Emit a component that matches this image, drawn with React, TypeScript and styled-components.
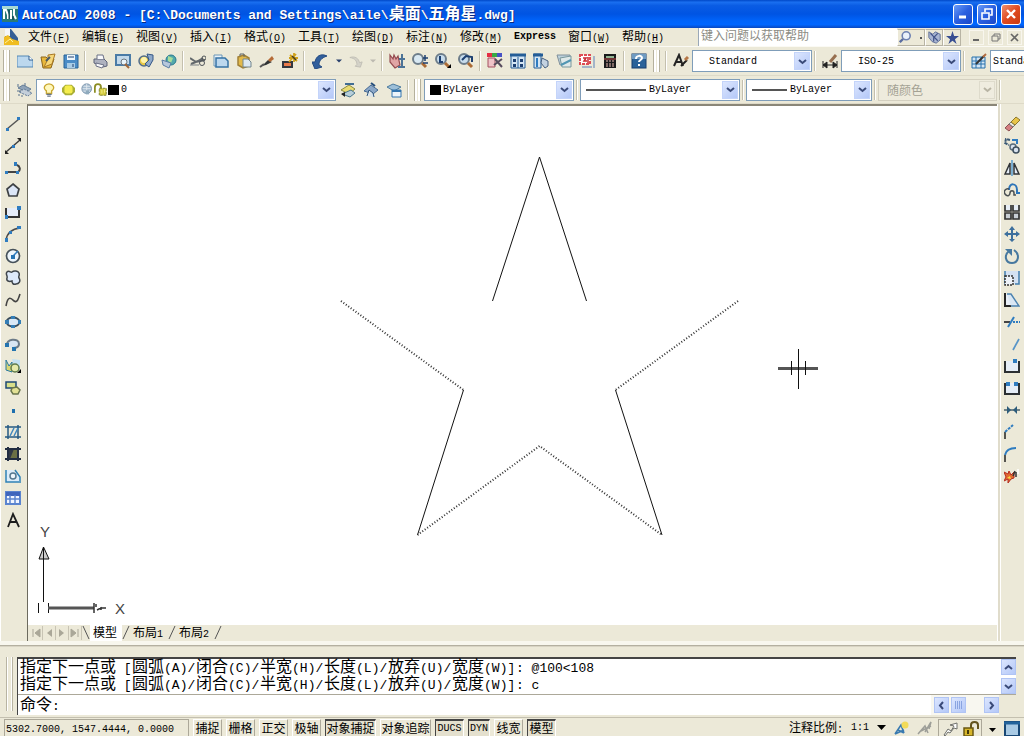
import React from 'react';
import styled, { createGlobalStyle } from 'styled-components';

const face = '#ece9d8';
const mono = '"Liberation Mono", "Noto Sans CJK SC", monospace';
const cjk = '"Noto Sans CJK SC", sans-serif';

const GlobalStyle = createGlobalStyle`
  * { box-sizing: border-box; }
  body { margin: 0; background: ${face}; overflow: hidden; }
  button, input, select { font: inherit; color: inherit; margin: 0; }
`;

const Window = styled.div`
  display: flex;
  flex-direction: column;
  height: 100vh;
  overflow: hidden;
  background: ${face};
  color: #000;
  font: 10px/16px ${mono};
`;

const Cjk = styled.span<{ $size?: number }>`
  font-family: ${cjk};
  font-size: ${p => p.$size ?? 12}px;
`;

/* ---------- title bar ---------- */

const TitleBar = styled.header`
  display: flex;
  align-items: center;
  flex: none;
  height: 28px;
  padding: 0 3px 0 2px;
  gap: 4px;
  color: #fff;
  background: linear-gradient(#0048c8 0, #1a6ff0 8%, #0a5ce4 20%, #0054e3 50%, #0064fb 75%, #0066ff 88%, #0a48c0 100%);
`;

const Title = styled.h1`
  flex: 1;
  margin: 0;
  overflow: hidden;
  white-space: pre;
  font: bold 13px/24px ${mono};
  text-shadow: 1px 1px #0a2a80;
`;

const WindowButtons = styled.div`
  display: flex;
  gap: 4px;
`;

const WindowButton = styled.button<{ $danger?: boolean }>`
  display: grid;
  place-items: center;
  width: 20px;
  height: 21px;
  padding: 0;
  border: 1px solid #fff;
  border-radius: 3px;
  background: ${p => (p.$danger ? 'linear-gradient(135deg, #f09070, #e04a20 50%, #c83a10)' : 'linear-gradient(135deg, #6a9cf8, #2a5fe0 50%, #1a48c8)')};
`;

/* ---------- menu bar ---------- */

const MenuBar = styled.nav`
  display: flex;
  align-items: center;
  flex: none;
  height: 19px;
  padding-left: 4px;
  border-bottom: 1px solid #fbfaf4;
`;

const MenuIcon = styled.span`
  display: flex;
  flex: none;
  width: 24px;
`;

const MenuItem = styled.button`
  flex: none;
  width: 54px;
  height: 18px;
  padding: 0;
  border: 0;
  background: none;
  text-align: left;
  white-space: nowrap;
  line-height: 16px;
`;

const HelpInput = styled.input`
  flex: 1;
  min-width: 0;
  height: 18px;
  margin-left: 22px;
  padding: 0 2px;
  border: 0;
  border-left: 1px solid #9aa8b8;
  background: #fff;
  &::placeholder { color: #8c8c84; opacity: 1; font: 12px ${cjk}; }
`;

const HelpButton = styled.button<{ $width: number }>`
  display: grid;
  place-items: center;
  flex: none;
  width: ${p => p.$width}px;
  height: 17px;
  padding: 0;
  border: 1px solid #b8b4a4;
  border-left-color: #fff;
  background: ${face};
`;

const ChildButtons = styled.div`
  display: flex;
  flex: none;
  gap: 4px;
  padding: 0 2px 0 8px;
`;

const ChildButton = styled.button`
  display: grid;
  place-items: center;
  width: 15px;
  height: 15px;
  padding: 0;
  border: 1px solid #f8f6ee;
  background: ${face};
`;

/* ---------- toolbars ---------- */

const Toolbar = styled.div<{ $height: number }>`
  display: flex;
  align-items: center;
  flex: none;
  height: ${p => p.$height}px;
  overflow: hidden;
  border-bottom: 1px solid #dedac8;
`;

const Grip = styled.span`
  flex: none;
  width: 7px;
  height: 22px;
  margin: 0 3px 0 3px;
  border: solid #b4b09c;
  border-width: 0 1px;
  background: linear-gradient(90deg, #fff 2px, ${face} 2px 3px, #fff 3px);
`;

const Divider = styled.span`
  flex: none;
  width: 6px;
  height: 20px;
  background: linear-gradient(90deg, transparent 2px, #c4c0ae 2px 3px, #fff 3px 4px, transparent 4px);
`;

const ToolButton = styled.button<{ $width?: number; $height?: number }>`
  display: grid;
  place-items: center;
  flex: none;
  width: ${p => p.$width ?? 23}px;
  height: ${p => p.$height ?? 22}px;
  padding: 0;
  border: 0;
  background: none;
`;

const Combo = styled.div<{ $width: number; $disabled?: boolean }>`
  display: grid;
  grid-template-columns: auto 1fr 16px;
  align-items: center;
  flex: none;
  width: ${p => p.$width}px;
  height: 22px;
  padding-right: 1px;
  border: 1px solid ${p => (p.$disabled ? '#d4d0c0' : '#7f9db9')};
  background: ${p => (p.$disabled ? '#eeebdd' : '#fff')};
  color: ${p => (p.$disabled ? '#a4a294' : '#000')};
`;

const ComboLead = styled.span`
  display: flex;
  align-items: center;
  grid-area: 1 / 1;
  padding-left: 5px;
`;

const ComboSelect = styled.select<{ $inset: number; $cjk?: boolean }>`
  grid-area: 1 / 1 / 2 / 4;
  width: 100%;
  height: 20px;
  padding: 0 0 0 ${p => p.$inset}px;
  appearance: none;
  border: 0;
  outline: 0;
  background: transparent;
  opacity: 1;
  font: ${p => (p.$cjk ? `12px ${cjk}` : `10px ${mono}`)};
`;

const ComboArrow = styled.span<{ $disabled?: boolean }>`
  display: grid;
  place-items: center;
  grid-area: 1 / 3;
  height: 18px;
  pointer-events: none;
  color: ${p => (p.$disabled ? '#b8b4a4' : '#3a4a78')};
  background: ${p => (p.$disabled ? '#efecdf' : 'linear-gradient(135deg, #dce6fe, #b4c8f8)')};
  border: 1px solid ${p => (p.$disabled ? '#dedbcc' : '#c4d4fa')};
`;

/* ---------- work area ---------- */

const WorkArea = styled.main`
  display: flex;
  flex: 1;
  min-height: 0;
`;

const SideBar = styled.aside<{ $right?: boolean }>`
  display: flex;
  flex-direction: column;
  flex: none;
  width: 27px;
  padding: 9px 0 0 ${p => (p.$right ? 2 : 0)}px;
  border-left: 1px solid #fff;
  ${p => p.$right && 'box-shadow: inset 2px 0 #e0dccb, inset 3px 0 #fff;'}
`;

const Document = styled.section`
  display: flex;
  flex-direction: column;
  flex: 1;
  min-width: 0;
  border-left: 1px solid #6c6a5e;
  border-top: 2px solid #8a8678;
`;

const Drawing = styled.svg`
  flex: 1;
  width: 100%;
  min-height: 0;
  background: #fff;
  font: 15px "Liberation Sans", sans-serif;
`;

const TabRow = styled.div`
  display: flex;
  align-items: center;
  flex: none;
  height: 16px;
  padding-left: 2px;
`;

const TabArrow = styled.button`
  display: grid;
  place-items: center;
  width: 13px;
  height: 14px;
  padding: 0;
  border: 0;
  border-right: 1px solid #c8c4b4;
  background: none;
`;

const Tab = styled.button<{ $active?: boolean }>`
  height: 16px;
  padding: 0 5px 0 3px;
  border: 0;
  background: ${p => (p.$active ? '#fff' : 'none')};
  white-space: nowrap;
  line-height: 14px;
`;

/* ---------- command window ---------- */

const CommandDock = styled.section`
  display: flex;
  flex: none;
  height: 77px;
  padding: 16px 8px 2px 3px;
  background: linear-gradient(#f8f7ee 4px, #b4b0a0 4px 5px, #d8d4c4 5px 6px, ${face} 6px);
  border-bottom: 1px solid #c4c0b0;
`;

const CommandGrip = styled.span`
  flex: none;
  width: 7px;
  margin: 0 4px 4px 3px;
  border: solid #b8b4a2;
  border-width: 0 1px;
  background: linear-gradient(90deg, #fff 1px, ${face} 1px 4px, #fff 4px);
`;

const CommandBox = styled.div`
  flex: 1;
  min-width: 0;
  border-left: 1px solid #444;
  border-top: 2px solid #444;
  font: 13px/16px ${mono};
`;

const History = styled.div`
  display: flex;
  height: 36px;
  background: #fff;
  border-bottom: 1px solid #aca899;
`;

const Lines = styled.div`
  flex: 1;
  min-width: 0;
  padding-left: 2px;
`;

const Line = styled.div`
  display: flex;
  align-items: baseline;
  height: 17px;
  white-space: pre;
  line-height: 12px;
`;

const Choice = styled.span`
  flex: none;
  min-width: 64px;
`;

const LineHead = styled.span`
  flex: none;
  min-width: 112px;
`;

const ScrollColumn = styled.div`
  display: flex;
  flex-direction: column;
  justify-content: space-between;
  flex: none;
  width: 15px;
`;

const ScrollButton = styled.button`
  display: grid;
  place-items: center;
  flex: none;
  width: 15px;
  height: 16px;
  padding: 0;
  color: #3a4a78;
  border: 1px solid #b0c4f4;
  background: linear-gradient(135deg, #dce6fe, #b4c8f8);
`;

const Prompt = styled.div`
  display: flex;
  height: 20px;
  background: #fff;
`;

const PromptLabel = styled.label`
  padding-left: 2px;
  line-height: 16px;
`;

const PromptInput = styled.input`
  flex: 1;
  min-width: 0;
  padding: 0 4px;
  border: 0;
  outline: 0;
  background: none;
`;

const ScrollRow = styled.div`
  display: flex;
  align-items: center;
  flex: none;
  gap: 2px;
  width: 68px;
  padding-left: 3px;
  background: #f8f7f0;
`;

const Corner = styled.span`
  flex: none;
  width: 17px;
  background: ${face};
`;

const ScrollGap = styled.span`
  flex: 1;
`;

/* ---------- status bar ---------- */

const StatusBar = styled.footer`
  display: flex;
  flex: none;
  gap: 4px;
  height: 18px;
  padding: 1px 3px 0 4px;
  white-space: nowrap;
  overflow: hidden;
`;

const Coordinates = styled.output`
  flex: none;
  width: 185px;
  padding-left: 1px;
  line-height: 19px;
  border: 1px solid #aca899;
  border-bottom: 0;
`;

const StatusToggle = styled.button<{ $width: number; $on?: boolean }>`
  flex: none;
  width: ${p => p.$width}px;
  height: 17px;
  padding: 0;
  text-align: center;
  line-height: ${p => (p.$on ? 13 : 15)}px;
  border: 1px solid;
  border-color: ${p => (p.$on ? '#444 #fff #fff #444' : '#fff #aca899 #aca899 #fff')};
  border-top-width: ${p => (p.$on ? 2 : 1)}px;
  border-bottom: 0;
  background: ${p => (p.$on ? '#e4e0ce' : face)};
`;

const ScaleLabel = styled.label`
  margin-left: auto;
  line-height: 16px;
`;

const ScaleSelect = styled.select`
  width: 26px;
  height: 17px;
  padding: 0 0 0 4px;
  appearance: none;
  border: 0;
  background: none;
`;

const StatusTray = styled.div`
  display: flex;
  border: 1px solid #aca899;
  border-bottom: 0;
`;

/* ---------- icons ---------- */

const navy = '#1c3f70';
const blue = '#2f7cc0';
const sky = '#bcd8ee';

const icons: Record<string, React.ReactNode> = {
  app: <><rect width="16" height="16" fill="#2a7a78" /><path d="M0 0h16v3H0z" fill="#a8d8d4" /><path d="M2 13V4h2l2 5v4M9 4v9M12 3v6l2 4" stroke="#fff" strokeWidth="2" fill="none" /><path d="M7 4v9M11 10v4" stroke="#0d3648" /></>,
  dwg: <><path d="M1 0h6l7 9v6H1z" fill="#355f95" /><path d="M1 0h5v7H1z" fill="#f4f6f8" /><path d="M0 8l4-2 4 4 7 2v4H0z" fill="#f0bd21" /><path d="M1 14l5-4 3 3" stroke="#fff2a0" fill="none" /></>,
  new: <><path d="M0 3h12l4 4v7H0z" fill={sky} stroke="#5588b5" /><path d="M12 3v4h4" fill="#fff" stroke="#315e90" /></>,
  open: <><path d="M1 4h5l2 2h6l-3 9H3z" fill="#e8b83c" stroke="#8b651b" /><path d="M8 6V2l7-1-3 10-8 3z" fill="#f6d779" stroke="#a87824" /><path d="M6 8l4-4" stroke="#4b5c68" strokeWidth="2" /></>,
  save: <><path d="M1 2h14v13H1z" fill="#4b8cc6" stroke="#286296" /><path d="M4 2h8v5H4z" fill="#eef6fb" /><path d="M4 10h8v5H4z" fill="#a9cce6" /><path d="M5 4h6M10 11v3" stroke={navy} /></>,
  print: <><path d="M2 6h10l3 3v4l-4 1-9-4z" fill="#aeb2bf" stroke="#5c6279" /><path d="M5 6V2h6l1 4M4 10l8 2-2 3-6-2z" fill="#f8f8fa" stroke="#6b7085" /></>,
  preview: <><path d="M1 2h14v10H1z" fill="#c3d9ea" stroke="#4a7ba6" strokeWidth="2" /><circle cx="9" cy="9" r="3" fill="#e8f4fa" stroke="#6b7680" /><path d="M10 11l4 4" stroke="#a16638" strokeWidth="2" /></>,
  publish: <><circle cx="6" cy="8" r="5" fill="#e8c846" stroke="#526e8d" strokeWidth="1.5" /><circle cx="6" cy="7" r="3" fill="#fff4ac" /><path d="M9 1l6 1v5l-4 7-4-3 4-4z" fill="#8fa9c9" stroke="#345786" /></>,
  globe: <><circle cx="10" cy="7" r="5" fill="#52a9ab" stroke="#287990" /><path d="M7 3l5 2-2 5-3-2" fill="#a8dc9a" /><path d="M1 7l9 3-2 5-6-3z" fill="#b7c8dc" stroke="#597da5" /></>,
  cut: <><path d="M0 5l6 4 9-2M1 11l7-3 5-3" stroke="#63696c" strokeWidth="2" fill="none" /><circle cx="12" cy="10" r="2.5" fill="none" stroke="#4f5458" /><circle cx="14" cy="5" r="2" fill="none" stroke="#4f5458" /><path d="M0 12h9" stroke="#7b8185" /></>,
  copy: <><path d="M1 2h8v11H1z" fill="#eaf3f8" stroke="#6a96b7" /><path d="M3 5h9l3 3v6H3z" fill={sky} stroke="#3673a5" strokeWidth="1.5" /></>,
  paste: <><path d="M2 4l6-2 5 3v8l-6 2-5-3z" fill="#e2b94a" stroke="#a08038" strokeWidth="1.5" /><path d="M7 6h5l3 3v5H7z" fill="#dce8f1" stroke="#72858c" /><path d="M4 3V1h4v3" stroke="#5c646a" fill="none" /></>,
  match: <><path d="M3 13l6-6 4 2-6 3z" fill="#303435" /><path d="M9 7l4-4 2 3-4 3z" fill="#b56b37" /><path d="M1 14l4-3" stroke="#555" strokeWidth="2" /></>,
  block: <><path d="M0 8h11v7H0z" fill="#333840" /><path d="M2 10h7v3H2z" fill="#ea7a4a" /><path d="M7 9l7-8M8 2l7 6M7 5h9M12 0v9" stroke="#d0a018" strokeWidth="1.8" /><path d="M10 3l4 4" stroke="#413a25" strokeWidth="1.5" /></>,
  undo: <path d="M0 9l3 7 7-2-3-2c0-4 2-7 8-9-6-3-11 0-12 6z" fill="#315f9c" stroke="#244b82" />,
  redo: <path d="M15 9l-2 6-6-1 2-2c0-4-2-7-8-8 6-2 10 1 11 6z" fill="#d4d2c8" stroke="#bfbdb4" />,
  down: <path d="M4 6h8l-4 4z" fill="#29406d" />,
  downGray: <path d="M4 6h8l-4 4z" fill="#bcb9b0" />,
  pan: <><path d="M1 2l3 4 1-4 2 4 2-3 2 9-5 3-5-6z" fill="#e0a5a5" stroke="#954b50" strokeWidth="1.2" /><path d="M13 1v13M9 14h7M10 6h6" stroke="#4c7397" strokeWidth="2" /></>,
  zoom: <><circle cx="6" cy="6" r="5" fill="#d8e8f2" stroke="#6d7d8a" strokeWidth="2" /><path d="M10 10l4 4" stroke="#aa6b35" strokeWidth="3" /><path d="M11 5h5M13 2v6M11 10h5" stroke={navy} strokeWidth="1.5" /></>,
  zoomWin: <><circle cx="6" cy="6" r="5" fill="#c7dcec" stroke="#6d7d8a" strokeWidth="2" /><path d="M5 3v6h3" stroke={navy} strokeWidth="2" fill="none" /><path d="M10 10l4 4" stroke="#aa6b35" strokeWidth="3" /><path d="M12 15h4v-4z" /></>,
  zoomPrev: <><circle cx="6" cy="6" r="5" fill="#c7dcec" stroke="#6d7d8a" strokeWidth="2" /><path d="M10 10l4 4" stroke="#aa6b35" strokeWidth="3" /><path d="M4 7l4-4 6 1v5" stroke={navy} strokeWidth="2" fill="none" /></>,
  props: <><path d="M0 0h5v4H0z" fill="#e52d44" /><path d="M5 0h5v4H5z" fill="#37a944" /><path d="M10 0h5v4h-5z" fill="#4651c5" /><path d="M1 5h7v9H1z" fill="#efc3c8" stroke="#a45161" /><path d="M7 12l8-6M8 6l7 8" stroke="#564b5d" strokeWidth="2" /></>,
  center: <><path d="M1 2h14v13H1z" fill="#d4e5f3" stroke="#245d97" /><path d="M0 2h16" stroke="#245d97" strokeWidth="3" /><path d="M3 6h3v3H3zM3 11h3v3H3zM10 6h3v3h-3zM10 11h3v3h-3z" fill={navy} /><path d="M8 4v11" stroke="#245d97" /></>,
  palette: <><path d="M1 1h7v14H1z" fill="#d4e5f3" stroke="#245d97" /><path d="M0 2h10" stroke="#245d97" strokeWidth="3" /><path d="M4 5v9" stroke={blue} strokeWidth="2" /><path d="M9 5l6 3v5l-3 2-4-5z" fill="#c3d2e0" stroke="#466080" /></>,
  sheet: <><path d="M1 2h13v10H4z" fill="#bdd1dc" stroke="#80909a" /><path d="M4 5l11-2v11H6z" fill="#dfe9e9" stroke="#78979b" /><path d="M5 12l10-5" stroke="#5196b2" strokeWidth="2" /></>,
  markup: <><path d="M1 2h10v9H1z" fill="#fff" stroke="#df4c55" strokeWidth="2" strokeDasharray="3 1" /><path d="M4 5h3l-2 3h3M9 4v6" stroke="#ca2831" strokeWidth="1.5" fill="none" /><path d="M15 3v12M3 14h10" stroke="#8aa4c4" strokeWidth="1.5" /></>,
  calc: <><path d="M2 1h12v14H2z" fill="#191b1c" /><path d="M4 3h8v2H4z" fill="#92b491" /><path d="M4 8h2M7 8h2M10 8h2M4 11h2M7 11h2M10 11h2M4 13h2M7 13h2M10 13h2" stroke="#e8bab0" /><path d="M2 6h12" stroke="#c54d4a" /></>,
  help: <><rect y="1" x="1" width="14" height="14" fill="#2a6299" stroke="#173f6f" /><path d="M1 1h14v5H1z" fill="#6f9bc2" /><path d="M5 6c0-4 6-4 6-1 0 2-3 2-3 4M8 11v2" stroke="#fff" strokeWidth="2" fill="none" /></>,
  textStyle: <><path d="M1 13L6 2l4 11M3 9h6" stroke="#242424" strokeWidth="2" fill="none" /><path d="M8 13l6-6" stroke="#222" strokeWidth="2" /><path d="M12 7l3-3" stroke="#b67747" strokeWidth="3" /></>,
  dimStyle: <><path d="M1 8v7M15 8v7M1 12h14M1 12l4-3v6zM15 12l-4-3v6z" stroke="#222" fill="#222" /><path d="M8 9l6-7" stroke="#987050" strokeWidth="3" /></>,
  tableStyle: <><path d="M1 4h13v11H1z" fill="#d3e5f4" stroke="#2771ac" /><path d="M1 8h13M1 11h13M5 4v11M10 4v11" stroke="#2771ac" /><path d="M5 11l8-8" stroke="#333" strokeWidth="2" /><path d="M12 4l3-3" stroke="#b36b3f" strokeWidth="2" /></>,
  layers: <><path d="M1 6l5-3 8 4-4 3z" fill="#8fa3b8" stroke="#667e98" /><path d="M2 10l5-3 8 4-4 3z" fill="#c4cfda" stroke="#5f7894" strokeDasharray="2 1" /><path d="M1 2v3M8 1v3M0 9h4M5 13v2M1 13h2" stroke="#57718d" /></>,
  layerCur: <><path d="M1 8l8-5 6 4-6 5z" fill="#eadb71" stroke="#8c8c43" /><path d="M2 12l9-4 4 3-5 4z" fill="#b7ced9" stroke="#48758d" /><path d="M5 2h9" stroke="#416d94" strokeWidth="2" /><path d="M1 12l4-2v5z" fill="#222" /></>,
  layerPrev: <><path d="M1 9l7-6 7 5-5 4z" fill="#8ba7c7" stroke="#466a94" /><path d="M4 14l2-6 4 3 1 4" fill="#dbe5ec" stroke="#2d557f" /><path d="M8 1l4 3" stroke="#264e7c" strokeWidth="2" /></>,
  layerState: <><path d="M1 5l6-3 8 3-7 4z" fill="#9dbfd8" stroke="#4d7c9f" /><path d="M6 8h9v7H6z" fill="#ecf4fa" stroke="#3274ae" /><path d="M6 9h9" stroke="#3274ae" strokeWidth="2" /></>,
  bulb: <><path d="M5 12V9C0 5 4 1 8 1s8 4 3 8v3z" fill="#fff8bd" stroke="#c9a72f" strokeWidth="1.5" /><path d="M5 13h6M6 15h4" stroke="#677489" strokeWidth="1.5" /></>,
  sun: <><path d="M4 2h8l4 4v5l-4 4H4l-4-4V6z" fill="#aaaf35" /><rect x="3" y="3" width="10" height="10" rx="3" fill="#f5ed4d" /></>,
  vpSun: <><circle cx="7" cy="7" r="6" fill="#a4bbcf" stroke="#7890a8" /><path d="M3 4h8M2 7h10M3 10h8M7 1v12" stroke="#e7eef2" /><path d="M6 9h4v5H6z" fill="#8faabd" /></>,
  unlock: <><path d="M1 11V5c0-5 7-5 7 0v6" stroke="#8c8d24" strokeWidth="2" fill="none" /><path d="M6 6h8v8H6z" fill="#d5cc42" stroke="#797b26" strokeDasharray="3 1" /><path d="M9 8v4M12 7v4" stroke="#f4ef91" /></>,
  search: <><circle cx="9" cy="6" r="5" fill="#eaf1fa" stroke="#6d81b1" strokeWidth="2" /><path d="M5 10l-4 4" stroke="#5a6da0" strokeWidth="3" /></>,
  comm: <><path d="M1 1l5 3 3-3 6 3v7l-5 4-5-2-4-5z" fill="#aab6d2" stroke="#53638e" /><path d="M3 3l9 9M12 3L7 8v5" stroke="#42548a" strokeWidth="1.5" fill="none" /></>,
  star: <path d="M8 0l2 6h6l-5 4 2 6-5-4-5 4 2-6-5-4h6z" fill="#394f92" />,
  line: <><path d="M2 13L14 3" stroke="#555" strokeWidth="1.5" /><path d="M1 12h3v3H1zM12 1h3v3h-3z" fill={blue} /></>,
  xline: <><path d="M1 14L15 2" stroke="#3d3d3d" strokeWidth="1.5" /><path d="M0 12v4h4zM12 0h4v4z" fill="#222" /><path d="M7 7h3v3H7z" fill={blue} /></>,
  pline: <><path d="M1 12h12c3-2 2-6-1-7" stroke="#444" strokeWidth="2" fill="none" /><path d="M0 11h3v3H0zM9 2h3v4H9zM11 11h3v3h-3z" fill={blue} /></>,
  polygon: <path d="M8 2l6 5-2 7H4L2 7z" fill="#dce6f7" stroke="#3d4044" strokeWidth="1.7" />,
  rect: <><path d="M1 4h13v9H1z" fill="#e6edf9" /><path d="M1 4v9h13V4" stroke="#333" strokeWidth="2" fill="none" /><path d="M0 11h3v4H0zM12 2h4v4h-4z" fill={blue} /></>,
  arc: <><path d="M1 14C2 8 6 3 15 2" stroke="#4a4a4a" strokeWidth="1.5" fill="none" /><path d="M0 12h3v4H0zM4 5h3v3H4zM12 0h4v3h-4z" fill={blue} /></>,
  circle: <><circle cx="8" cy="8" r="6.5" fill="#edf5fc" stroke="#46515a" strokeWidth="1.7" /><path d="M8 8l5-5" stroke={blue} strokeWidth="1.5" /><path d="M6 7h4v4H6z" fill="#2673b4" /></>,
  cloud: <path d="M2 2c2-2 4 1 5 0 2-2 6-1 7 1 1 3-1 3 0 5 2 3 0 6-3 6-3 1-4-1-4-3-3 1-6 0-5-3 1-2-2-4 0-6z" fill="#dde9fa" stroke="#3f454b" strokeWidth="1.5" />,
  spline: <path d="M1 14c2-12 6-7 8-5 3 2 4-1 6-7" stroke="#444" strokeWidth="1.6" fill="none" />,
  ellipse: <><ellipse cx="8" cy="8" rx="6.5" ry="4.5" fill="#d9e9f7" stroke="#394b5a" strokeWidth="1.8" /><path d="M0 6h4v4H0zM6 2h4v3H6zM13 6h3v4h-3zM6 11h4v3H6z" fill="#347db5" /></>,
  ellArc: <><path d="M2 10C0 3 14 1 14 8c0 3-3 4-6 4" stroke="#6b7a87" strokeWidth="2" fill="#d8e6f3" /><path d="M0 7h4v4H0zM7 11h4v4H7z" fill="#2474af" /></>,
  insert: <><path d="M7 1l8 1v11L9 8z" fill="#c4e1f1" /><path d="M1 2v10l6 2V4L4 8z" fill="#d8d675" stroke="#2778a2" /><circle cx="10" cy="10" r="4" fill="#e6eaaa" stroke="#617b4b" strokeWidth="1.5" /><path d="M12 15h4v-4z" /></>,
  makeBlock: <><path d="M1 2h10v6H1z" fill="#d8df8b" stroke="#1e4a75" strokeWidth="1.5" /><path d="M7 8l5-1 3 3-2 4H8L6 11z" fill="#e2e195" stroke="#68744b" strokeWidth="1.5" /></>,
  point: <path d="M7 7h3v4H7z" fill="#1f6fae" />,
  hatch: <><path d="M3 1v14M13 1v14M0 3h16M0 13h16" stroke="#255982" strokeWidth="1.5" /><path d="M5 12l4-8M9 12l4-8" stroke="#4087be" strokeWidth="1.5" /></>,
  gradient: <><path d="M2 3h12v10H2z" fill="#6b7045" /><path d="M2 3h7L5 13H2z" fill="#303846" /><path d="M3 1v14M13 1v14M0 3h16M0 13h16" stroke="#222d42" strokeWidth="2" /></>,
  region: <><path d="M1 2h7l7 7v5H1z" fill="#dcecfa" /><path d="M1 2v12h15M10 2l5 7v4" stroke="#2f81b6" strokeWidth="1.5" fill="none" /><circle cx="8" cy="8" r="3" fill="#eef6fc" stroke="#56788f" strokeWidth="1.5" /></>,
  table: <><path d="M1 2h14v12H1z" fill="#f1f5ff" stroke="#5b84cf" strokeWidth="2" /><path d="M1 4h14" stroke="#3f65bc" strokeWidth="4" /><path d="M1 9h14M5 5v9M10 5v9" stroke="#5b84cf" strokeWidth="1.5" /></>,
  mtext: <path d="M3 15L8 2l6 13M5 10h7" stroke="#1d1d1d" strokeWidth="1.8" fill="none" />,
  erase: <><path d="M1 12l4-4 4 3-4 4z" fill="#d57f81" stroke="#8d5052" /><path d="M5 8l2-2 4 3-2 2z" fill="#e9e7df" stroke="#777" /><path d="M7 6l5-5 4 3-5 5z" fill="#e8c449" stroke="#8d782f" /></>,
  copyObj: <><path d="M6 2L2 1 1 5l4 2" stroke="#3c5a76" strokeWidth="2" fill="none" strokeDasharray="3 1" /><path d="M8 2h5v4" stroke={blue} strokeWidth="2" fill="none" /><circle cx="9" cy="9" r="3" fill="#d8e2ee" stroke="#586b7b" strokeWidth="1.5" /><circle cx="12" cy="12" r="3" fill="#d8e2ee" stroke="#3c4d5c" strokeWidth="1.5" /></>,
  mirror: <><path d="M6 3v11H1zM10 3v11h5z" fill="#e5edf8" stroke="#303438" strokeWidth="1.5" /><path d="M8 0v16" stroke="#3187cb" strokeWidth="1.2" /></>,
  offset: <><path d="M5 8c0-8 8-7 8 0v3h3" stroke="#2d74b8" strokeWidth="2" fill="none" /><path d="M5 7c-3-1-6 2-4 5s5 2 5-1 4-3 4 0v2h2" stroke="#494f52" strokeWidth="1.5" fill="none" /></>,
  array: <><path d="M1 1v6h6V1M9 1v6h6V1" fill="#e6edf6" stroke="#333" strokeWidth="1.7" /><path d="M1 9h6v6H1zM9 9h6v6H9z" fill="#c8ced4" stroke="#333" strokeWidth="1.7" /></>,
  move: <path d="M8 0l3 4H9v3h3V5l4 3-4 3V9H9v4h2l-3 3-3-3h2V9H4v2L0 8l4-3v2h3V4H5z" fill="#3d6f9d" />,
  rotate: <><path d="M5 3C0 7 1 15 8 15S16 6 10 2" stroke="#47789f" strokeWidth="2" fill="none" /><path d="M1 1h7v7L5 5z" fill="#47789f" /></>,
  scale: <><path d="M1 1h14v13H1z" fill="#d4e1f2" /><path d="M1 1v13M11 14h4V1" stroke="#417eae" strokeWidth="1.5" fill="none" /><path d="M1 6h8v9H1z" fill="#eef2f8" stroke="#333" strokeWidth="1.5" strokeDasharray="2 1" /></>,
  stretch: <><path d="M1 2v12h6V2z" fill="#e9eff8" /><path d="M1 1v13h6" stroke="#252525" strokeWidth="2" fill="none" /><path d="M3 2h4l8 12H7" stroke="#4d83b0" strokeWidth="1.5" fill="#dae7f4" /></>,
  trim: <><path d="M0 8h6" stroke="#444" strokeWidth="2" /><path d="M4 13L10 3" stroke={blue} strokeWidth="2" /><path d="M9 8h7" stroke={blue} strokeWidth="2" strokeDasharray="2 1" /></>,
  extend: <path d="M9 14l6-11" stroke="#5795c8" strokeWidth="1.7" />,
  breakAt: <><path d="M1 3v11h14V3" fill="#e5edf7" stroke="#2b2f33" strokeWidth="2" /><path d="M9 1h4v4H9z" fill={blue} /></>,
  breakObj: <><path d="M1 3v11h14V3" fill="#e5edf7" stroke="#2b2f33" strokeWidth="2" /><path d="M2 2h4v4H2zM10 2h4v4h-4z" fill={blue} /></>,
  join: <><path d="M0 8h16" stroke="#49616e" strokeWidth="1.5" /><path d="M3 4l4 4-4 4zM13 4L9 8l4 4z" fill="#2d5c7b" /></>,
  chamfer: <><path d="M1 8v7" stroke="#222" strokeWidth="1.5" /><path d="M1 8l8-7" stroke={blue} strokeWidth="2" strokeDasharray="3 1" /></>,
  fillet: <><path d="M1 9v7" stroke="#222" strokeWidth="1.5" /><path d="M1 9c1-5 4-7 11-7" stroke={blue} strokeWidth="2" fill="none" /></>,
  explode: <><path d="M0 4l4 2 1-3 2 4 3-3v6l-3 1-3 4v-4l-4 2 2-4z" fill="#e36b31" stroke="#b42d20" /><path d="M3 10l3-2 1 3" fill="#f7dd48" /><path d="M9 8l2-5M12 4v5" stroke="#333" strokeWidth="1.5" /><path d="M14 1v5" stroke="#fff" strokeWidth="1.5" /></>,
  annoVis: <><path d="M2 14L8 5l3 8M5 10l6 3M2 14l9-4" stroke="#397ab0" strokeWidth="1.6" fill="none" /><circle cx="12" cy="5" r="3.5" fill="#f2db59" /></>,
  annoAuto: <path d="M1 14l7-8 3 7M4 11l10-5M8 12l6-10-2 7" stroke="#9d9e98" strokeWidth="1.5" fill="none" />,
  resize: <path d="M2 14l4-6 3 2 3-5-4-1 7-2v6l-3-1-4 5-2-1-3 4z" fill="#fff" stroke="#6f706b" />,
  padlock: <><path d="M8 8V4c0-4 7-4 7 0v4" stroke="#63531c" strokeWidth="2" fill="none" /><path d="M1 7h9v8H1z" fill="#d6b52b" stroke="#6a5813" strokeWidth="1.5" /><path d="M5 9v4" stroke="#443909" strokeWidth="2" /></>,
  clean: <><path d="M1 2h14v14H1z" fill="#a9cae4" stroke="#184775" strokeWidth="2" /><path d="M0 3h16" stroke="#22639b" strokeWidth="3" /></>,
};

const Icon = ({ name, size = 16 }: { name: string; size?: number }) => (
  <svg width={size} height={size} viewBox="0 0 16 16" aria-hidden="true">{icons[name]}</svg>
);

const Chevron = ({ turn = 0 }: { turn?: number }) => (
  <svg width="9" height="9" viewBox="0 0 9 9" aria-hidden="true">
    <path d="M1 3l3.5 3L8 3" fill="none" stroke="currentColor" strokeWidth="2" transform={`rotate(${turn} 4.5 4.5)`} />
  </svg>
);

const Swatch = () => <svg width="11" height="10" aria-hidden="true"><rect width="11" height="10" /></svg>;
const Stroke = ({ length }: { length: number }) => (
  <svg width={length} height="2" aria-hidden="true"><rect width={length} height="2" fill="#555" /></svg>
);

/* ---------- parts ---------- */

const Tools = ({ names }: { names: string[] }) => (
  <>{names.map(n => <ToolButton key={n} aria-label={n}><Icon name={n} /></ToolButton>)}</>
);

type DropProps = { label: string; value: string; width: number; inset: number; lead?: React.ReactNode; disabled?: boolean };

const Drop = ({ label, value, width, inset, lead, disabled }: DropProps) => (
  <Combo $width={width} $disabled={disabled}>
    <ComboLead>{lead}</ComboLead>
    <ComboSelect aria-label={label} $inset={inset} $cjk={disabled} disabled={disabled}>
      <option>{value}</option>
    </ComboSelect>
    <ComboArrow $disabled={disabled}><Chevron /></ComboArrow>
  </Combo>
);

const menus: [string, string][] = [
  ['文件', 'F'], ['编辑', 'E'], ['视图', 'V'], ['插入', 'I'], ['格式', 'O'], ['工具', 'T'],
  ['绘图', 'D'], ['标注', 'N'], ['修改', 'M'], ['Express', ''], ['窗口', 'W'], ['帮助', 'H'],
];

const drawTools = ['line', 'xline', 'pline', 'polygon', 'rect', 'arc', 'circle', 'cloud', 'spline', 'ellipse', 'ellArc', 'insert', 'makeBlock', 'point', 'hatch', 'gradient', 'region', 'table', 'mtext'];
const modifyTools = ['erase', 'copyObj', 'mirror', 'offset', 'array', 'move', 'rotate', 'scale', 'stretch', 'trim', 'extend', 'breakAt', 'breakObj', 'join', 'chamfer', 'fillet', 'explode'];

const choices: [string, string][] = [['圆弧', 'A'], ['闭合', 'C'], ['半宽', 'H'], ['长度', 'L'], ['放弃', 'U'], ['宽度', 'W']];

const PromptLine = ({ reply }: { reply: string }) => (
  <Line>
    <LineHead><Cjk $size={16}>指定下一点或</Cjk> [</LineHead>
    {choices.map(([name, key], i) => (
      <Choice key={key}><Cjk $size={16}>{name}</Cjk>({key}){i < choices.length - 1 ? '/' : ']'}</Choice>
    ))}
    <span>: {reply}</span>
  </Line>
);

const toggles: { text: string; width: number; on?: boolean; latin?: boolean }[] = [
  { text: '捕捉', width: 29 }, { text: '栅格', width: 29 }, { text: '正交', width: 29 }, { text: '极轴', width: 29 },
  { text: '对象捕捉', width: 51, on: true }, { text: '对象追踪', width: 51 },
  { text: 'DUCS', width: 29, on: true, latin: true }, { text: 'DYN', width: 22, on: true, latin: true },
  { text: '线宽', width: 29 }, { text: '模型', width: 29, on: true },
];

const TabEdge = ({ back }: { back?: boolean }) => (
  <svg width="8" height="16" aria-hidden="true">
    <path d={back ? 'M1 1l6 13' : 'M7 1L1 14'} stroke="#555" fill="none" />
  </svg>
);

export default function App() {
  return (
    <Window>
      <GlobalStyle />
      <TitleBar>
        <Icon name="app" />
        <Title>
          {'AutoCAD 2008 - [C:\\Documents and Settings\\aile\\'}
          <Cjk $size={16}>桌面</Cjk>{'\\'}<Cjk $size={16}>五角星</Cjk>.dwg]
        </Title>
        <WindowButtons>
          <WindowButton aria-label="最小化"><svg width="12" height="12"><path d="M2 9h7" stroke="#fff" strokeWidth="3" /></svg></WindowButton>
          <WindowButton aria-label="还原"><svg width="12" height="12"><path d="M4 4V1h7v6H9M1 5h7v6H1z" stroke="#fff" strokeWidth="1.6" fill="none" /></svg></WindowButton>
          <WindowButton aria-label="关闭" $danger><svg width="12" height="12"><path d="M2 2l8 8M10 2l-8 8" stroke="#fff" strokeWidth="2.4" /></svg></WindowButton>
        </WindowButtons>
      </TitleBar>

      <MenuBar>
        <MenuIcon><Icon name="dwg" /></MenuIcon>
        {menus.map(([name, key]) => (
          <MenuItem key={name}>{key ? <><Cjk>{name}</Cjk>(<u>{key}</u>)</> : <b>{name}</b>}</MenuItem>
        ))}
        <HelpInput aria-label="帮助搜索" placeholder="键入问题以获取帮助" />
        <HelpButton aria-label="搜索" $width={28}><svg width="24" height="13" aria-hidden="true"><g transform="scale(0.8)">{icons.search}</g><path d="M21 7h2" stroke="#555" strokeWidth="2" /></svg></HelpButton>
        <HelpButton aria-label="通讯中心" $width={18}><Icon name="comm" size={13} /></HelpButton>
        <HelpButton aria-label="收藏夹" $width={18}><Icon name="star" size={13} /></HelpButton>
        <ChildButtons>
          <ChildButton aria-label="最小化图形"><svg width="9" height="9"><path d="M1 7h6" stroke="#666" strokeWidth="2" /></svg></ChildButton>
          <ChildButton aria-label="还原图形"><svg width="10" height="9"><path d="M3 3V1h6v5H7M1 3h6v5H1z" stroke="#777" fill="none" /></svg></ChildButton>
          <ChildButton aria-label="关闭图形"><svg width="9" height="9"><path d="M1 1l7 7M8 1L1 8" stroke="#666" strokeWidth="1.7" /></svg></ChildButton>
        </ChildButtons>
      </MenuBar>

      <Toolbar $height={29}>
        <Grip />
        <Tools names={['new', 'open', 'save']} /><Divider />
        <Tools names={['print', 'preview', 'publish', 'globe']} /><Divider />
        <Tools names={['cut', 'copy', 'paste', 'match', 'block']} /><Divider />
        <ToolButton aria-label="undo" $width={26}><Icon name="undo" /></ToolButton>
        <ToolButton aria-label="undo list" $width={12}><Icon name="down" size={12} /></ToolButton>
        <ToolButton aria-label="redo" $width={22}><Icon name="redo" size={14} /></ToolButton>
        <ToolButton aria-label="redo list" $width={12}><Icon name="downGray" size={12} /></ToolButton><Divider />
        <Tools names={['pan', 'zoom', 'zoomWin', 'zoomPrev']} /><Divider />
        <Tools names={['props', 'center', 'palette', 'sheet', 'markup', 'calc']} /><Divider />
        <Tools names={['help']} />
        <Grip /><Divider />
        <Tools names={['textStyle']} />
        <Drop label="文字样式" value="Standard" width={120} inset={16} /><Divider />
        <Tools names={['dimStyle']} />
        <Drop label="标注样式" value="ISO-25" width={120} inset={16} /><Divider />
        <Tools names={['tableStyle']} />
        <Drop label="表格样式" value="Standard" width={120} inset={2} />
      </Toolbar>

      <Toolbar $height={28}>
        <Grip />
        <Tools names={['layers']} />
        <Drop label="图层" value="0" width={300} inset={84} lead={<><Icon name="bulb" size={14} /><span>&nbsp;</span><Icon name="sun" size={13} /><span>&nbsp;</span><Icon name="vpSun" size={13} /><Icon name="unlock" size={14} /><Swatch /></>} />
        <Tools names={['layerCur', 'layerPrev', 'layerState']} />
        <Divider /><Grip />
        <Drop label="颜色" value="ByLayer" width={150} inset={18} lead={<Swatch />} /><Divider />
        <Drop label="线型" value="ByLayer" width={160} inset={68} lead={<Stroke length={60} />} /><Divider />
        <Drop label="线宽" value="ByLayer" width={126} inset={43} lead={<Stroke length={35} />} /><Divider />
        <Drop label="打印样式" value="随颜色" width={119} inset={8} disabled /><Divider />
      </Toolbar>

      <WorkArea>
        <SideBar>
          {drawTools.map(n => <ToolButton key={n} aria-label={n}><Icon name={n} /></ToolButton>)}
        </SideBar>
        <Document>
          <Drawing role="img" aria-label="五角星">
            <g fill="none" stroke="#111" strokeWidth="1">
              <path d="M464.5 195L511.5 51L558.5 195M435.5 284L389.5 429M587.5 284L634 429" />
              <path d="M313 195L435.5 284M710 195L587.5 284M389.5 429L511.5 340L634 429" strokeWidth="2" stroke="#333" strokeDasharray="1 2" />
            </g>
            <path d="M750 262.5h40" stroke="#555" strokeWidth="3" />
            <path d="M770.5 243v40M763.5 255v14M777.5 255v14" stroke="#111" />
            <path d="M15.5 441L11 453h10zM15.5 441v55M10.5 497v10M20.5 497v10" fill="#ccc" stroke="#111" />
            <path d="M20 502h46" stroke="#555" strokeWidth="3" />
            <path d="M66 497v10M68 498v3M69 504l4-2v2M72 502h6" stroke="#333" strokeWidth="1.5" fill="none" />
            <text x="12" y="431" fill="#444">Y</text>
            <text x="87" y="508" fill="#444">X</text>
          </Drawing>
          <TabRow>
            <TabArrow aria-label="第一个"><svg width="10" height="10"><path d="M2 1v8M9 1v8L4 5z" fill="#aaa798" stroke="#aaa798" /></svg></TabArrow>
            <TabArrow aria-label="上一个"><svg width="10" height="10"><path d="M8 1v8L3 5z" fill="#aaa798" /></svg></TabArrow>
            <TabArrow aria-label="下一个"><svg width="10" height="10"><path d="M2 1v8l5-4z" fill="#aaa798" /></svg></TabArrow>
            <TabArrow aria-label="最后一个"><svg width="10" height="10"><path d="M8 1v8M1 1v8l5-4z" fill="#aaa798" stroke="#aaa798" /></svg></TabArrow>
            <TabEdge back />
            <Tab $active><Cjk>模型</Cjk></Tab><TabEdge />
            <Tab><Cjk>布局</Cjk>1</Tab><TabEdge />
            <Tab><Cjk>布局</Cjk>2</Tab><TabEdge />
          </TabRow>
        </Document>
        <SideBar $right>
          {modifyTools.map(n => <ToolButton key={n} aria-label={n}><Icon name={n} /></ToolButton>)}
        </SideBar>
      </WorkArea>

      <CommandDock>
        <CommandGrip />
        <CommandBox>
          <History>
            <Lines>
              <PromptLine reply="@100<108" />
              <PromptLine reply="c" />
            </Lines>
            <ScrollColumn>
              <ScrollButton aria-label="向上滚动"><Chevron turn={180} /></ScrollButton>
              <ScrollButton aria-label="向下滚动"><Chevron /></ScrollButton>
            </ScrollColumn>
          </History>
          <Prompt>
            <PromptLabel htmlFor="command"><Cjk $size={16}>命令</Cjk>:</PromptLabel>
            <PromptInput id="command" />
            <ScrollRow>
              <ScrollButton aria-label="向左滚动"><Chevron turn={90} /></ScrollButton>
              <ScrollButton aria-label="滚动块"><svg width="9" height="8"><path d="M1.5 0v8M3.5 0v8M5.5 0v8M7.5 0v8" stroke="#8aa4e0" /></svg></ScrollButton>
              <ScrollGap />
              <ScrollButton aria-label="向右滚动"><Chevron turn={-90} /></ScrollButton>
            </ScrollRow>
            <Corner />
          </Prompt>
        </CommandBox>
      </CommandDock>

      <StatusBar>
        <Coordinates>5302.7000, 1547.4444, 0.0000</Coordinates>
        {toggles.map(t => (
          <StatusToggle key={t.text} $width={t.width} $on={t.on} aria-pressed={!!t.on}>
            {t.latin ? t.text : <Cjk>{t.text}</Cjk>}
          </StatusToggle>
        ))}
        <ScaleLabel htmlFor="scale"><Cjk>注释比例</Cjk>:</ScaleLabel>
        <ScaleSelect id="scale"><option>1:1</option></ScaleSelect>
        <ToolButton aria-label="比例列表" $width={9} $height={17}><svg width="9" height="6"><path d="M0 0h9L4.5 5z" /></svg></ToolButton>
        <ToolButton aria-label="注释可见性" $width={22} $height={17}><Icon name="annoVis" /></ToolButton>
        <ToolButton aria-label="自动添加比例" $width={18} $height={17}><Icon name="annoAuto" /></ToolButton>
        <StatusTray>
          <ToolButton aria-label="调整大小" $width={21} $height={17}><Icon name="resize" /></ToolButton>
          <ToolButton aria-label="锁定" $width={21} $height={17}><Icon name="padlock" /></ToolButton>
        </StatusTray>
        <ToolButton aria-label="状态栏菜单" $width={12} $height={22}><svg width="7" height="5"><path d="M0 0h7L3.5 4z" /></svg></ToolButton>
        <ToolButton aria-label="全屏显示" $width={19} $height={17}><Icon name="clean" /></ToolButton>
      </StatusBar>
    </Window>
  );
}
